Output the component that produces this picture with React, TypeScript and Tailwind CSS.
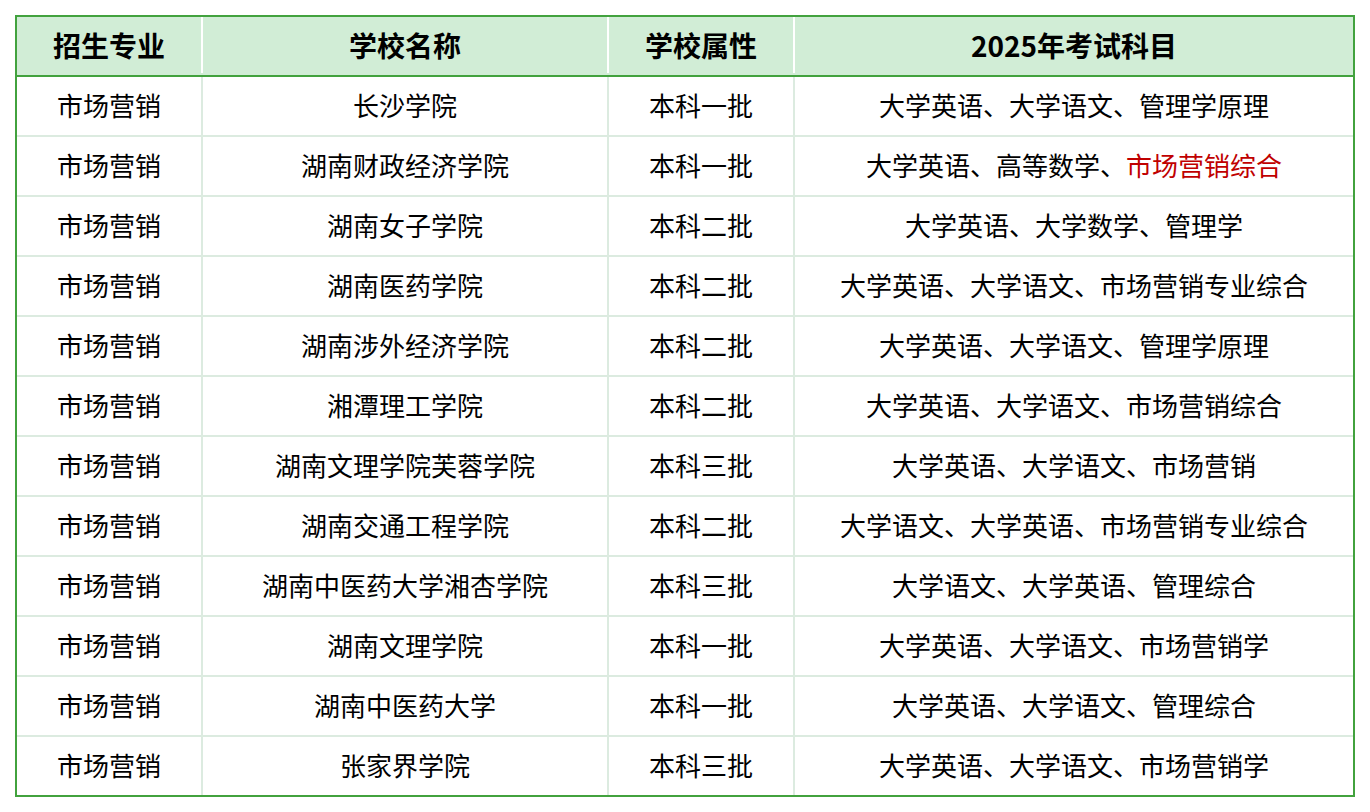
import React from "react";

type Row = {
  major: string;
  school: string;
  level: string;
  subjects: string;
  highlight?: string;
};

const rows: Row[] = [
  { major: "市场营销", school: "长沙学院", level: "本科一批", subjects: "大学英语、大学语文、管理学原理" },
  { major: "市场营销", school: "湖南财政经济学院", level: "本科一批", subjects: "大学英语、高等数学、", highlight: "市场营销综合" },
  { major: "市场营销", school: "湖南女子学院", level: "本科二批", subjects: "大学英语、大学数学、管理学" },
  { major: "市场营销", school: "湖南医药学院", level: "本科二批", subjects: "大学英语、大学语文、市场营销专业综合" },
  { major: "市场营销", school: "湖南涉外经济学院", level: "本科二批", subjects: "大学英语、大学语文、管理学原理" },
  { major: "市场营销", school: "湘潭理工学院", level: "本科二批", subjects: "大学英语、大学语文、市场营销综合" },
  { major: "市场营销", school: "湖南文理学院芙蓉学院", level: "本科三批", subjects: "大学英语、大学语文、市场营销" },
  { major: "市场营销", school: "湖南交通工程学院", level: "本科二批", subjects: "大学语文、大学英语、市场营销专业综合" },
  { major: "市场营销", school: "湖南中医药大学湘杏学院", level: "本科三批", subjects: "大学语文、大学英语、管理综合" },
  { major: "市场营销", school: "湖南文理学院", level: "本科一批", subjects: "大学英语、大学语文、市场营销学" },
  { major: "市场营销", school: "湖南中医药大学", level: "本科一批", subjects: "大学英语、大学语文、管理综合" },
  { major: "市场营销", school: "张家界学院", level: "本科三批", subjects: "大学英语、大学语文、市场营销学" },
];

export default function App() {
  return (
    <div
      className="min-h-screen bg-white pl-[15px] pt-[15px] text-black"
      style={{ fontFamily: '"Noto Sans CJK SC", "Noto Sans", sans-serif' }}
    >
      <div className="w-[1340px] border-2 border-[#42a23e]">
        <div className="flex h-[60px] border-b-2 border-[#42a23e] bg-[#d1edd6] pb-[2px] text-[28px] font-bold">
          <div className="flex w-[186px] items-center justify-center border-r-2 border-white">招生专业</div>
          <div className="flex w-[406px] items-center justify-center border-r-2 border-white">学校名称</div>
          <div className="flex w-[186px] items-center justify-center border-r-2 border-white">学校属性</div>
          <div className="flex flex-1 items-center justify-center">2025年考试科目</div>
        </div>

        {rows.map((r, i) => {
          const last = i === rows.length - 1;
          return (
            <div
              key={i}
              className={
                last
                  ? "flex h-[58px] text-[26px]"
                  : "flex h-[60px] border-b-2 border-[#dcebe0] text-[26px]"
              }
            >
              <div className="flex w-[186px] items-center justify-center border-r-2 border-[#dcebe0] pb-[3px]">{r.major}</div>
              <div className="flex w-[406px] items-center justify-center border-r-2 border-[#dcebe0] pb-[3px]">{r.school}</div>
              <div className="flex w-[186px] items-center justify-center border-r-2 border-[#dcebe0] pb-[3px]">{r.level}</div>
              <div className="flex flex-1 items-center justify-center pb-[3px]">
                {r.subjects}
                {r.highlight && <span className="text-[#c00000]">{r.highlight}</span>}
              </div>
            </div>
          );
        })}
      </div>
    </div>
  );
}
